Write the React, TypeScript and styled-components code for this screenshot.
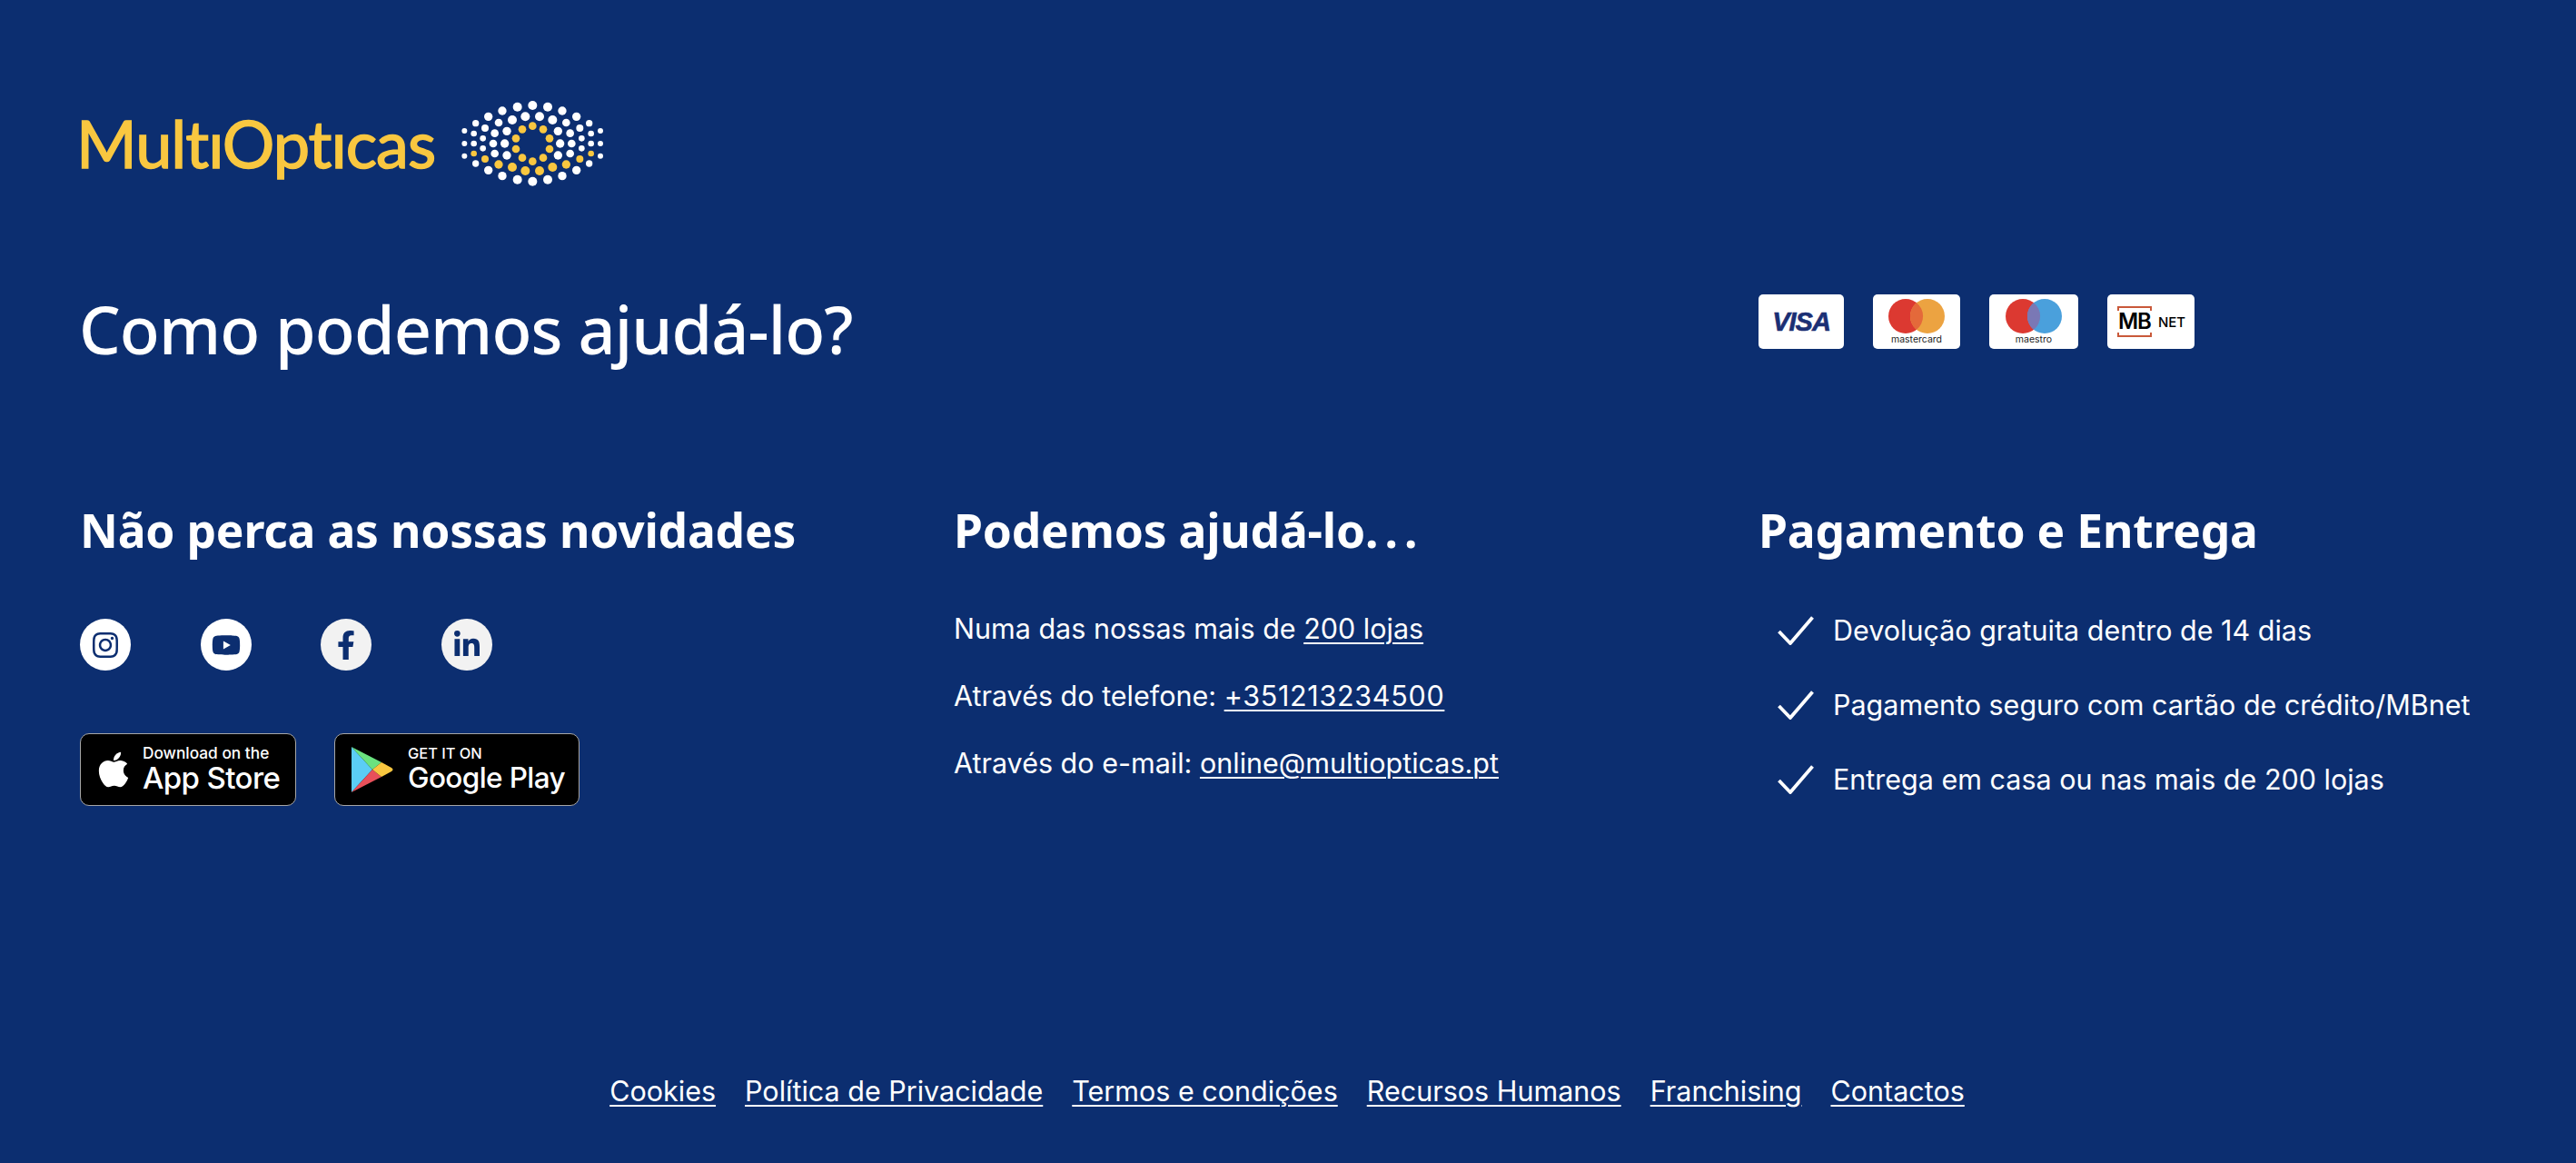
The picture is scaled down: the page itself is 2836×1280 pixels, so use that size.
import { createGlobalStyle } from 'styled-components';
import styled from 'styled-components';
import { FaApple, FaFacebookF, FaInstagram, FaLinkedinIn, FaYoutube } from 'react-icons/fa';

const HEADING_FONT = `"Noto Sans", "Open Sans", sans-serif`;
const BODY_FONT = `Inter, "Liberation Sans", sans-serif`;
const YELLOW = '#f9c740';

// [x, y, r, yellow] measured on a 540x330 canvas
const DOTS: [number, number, number, number][] = [
	[64, 132, 9, 0], [101, 107, 11, 0], [143, 85, 14, 0], [189, 66, 14, 0], [239, 53, 15, 0], [289, 48, 15, 0],
	[339, 53, 15, 0], [387, 66, 14, 0], [434, 85, 14, 0], [476, 107, 11, 0], [513, 132, 9, 0],
	[95, 141, 10, 0], [132, 123, 12, 0], [177, 105, 13, 0], [222, 96, 15, 0], [265, 85, 15, 0],
	[312, 85, 15, 0], [355, 96, 15, 0], [400, 105, 13, 0], [445, 123, 12, 0], [482, 141, 10, 0],
	[125, 157, 10, 0], [164, 140, 13, 0], [204, 133, 14, 0], [255, 127, 13, 1], [289, 116, 13, 1],
	[324, 127, 13, 1], [373, 133, 14, 0], [413, 140, 13, 0], [451, 157, 10, 0],
	[64, 174, 9, 0], [95, 174, 10, 0], [159, 174, 13, 0], [197, 174, 14, 0], [380, 174, 14, 0],
	[418, 174, 13, 0], [482, 174, 10, 0], [513, 174, 9, 0],
	[234, 157, 13, 1], [345, 157, 13, 1], [234, 192, 13, 1], [345, 192, 13, 1],
	[125, 190, 10, 0], [164, 207, 13, 0], [204, 213, 14, 0], [373, 213, 14, 0], [413, 207, 13, 0], [451, 190, 10, 0],
	[64, 215, 9, 0], [95, 207, 10, 1], [132, 225, 12, 1], [177, 243, 14, 1], [222, 252, 15, 1], [265, 264, 15, 1],
	[312, 264, 15, 1], [355, 252, 15, 1], [400, 243, 14, 1], [445, 225, 12, 1], [482, 207, 10, 1], [513, 215, 9, 0],
	[255, 221, 13, 1], [289, 233, 13, 1], [324, 221, 13, 1],
	[101, 240, 11, 0], [143, 262, 14, 0], [189, 281, 14, 0], [239, 293, 15, 0], [289, 299, 15, 0],
	[339, 293, 15, 0], [387, 281, 14, 0], [434, 262, 14, 0], [476, 240, 11, 0],
];

const GlobalStyle = createGlobalStyle`
	html, body {
		margin: 0;
		padding: 0;
		background: #0c2e70;
	}
	a {
		color: #fff;
		text-decoration: underline;
		text-underline-offset: 4px;
		text-decoration-thickness: 2px;
	}
`;

const Page = styled.footer`
	box-sizing: border-box;
	width: 2836px;
	height: 1280px;
	background: #0c2e70;
	color: #fff;
	padding: 100px 0 0 88px;
	font-family: ${BODY_FONT};
	overflow: hidden;
`;

const LogoRow = styled.div`
	display: flex;
	align-items: center;
	gap: 11px;
	height: 110px;
	margin-left: -4px;
`;

const LogoText = styled.span`
	font-family: Lato, sans-serif;
	font-size: 72px;
	font-weight: 400;
	line-height: 84px;
	padding-top: 3px;
	color: ${YELLOW};
	letter-spacing: -1px;
	-webkit-text-stroke: 1.5px ${YELLOW};
`;

const Grid = styled.div`
	display: grid;
	grid-template-columns: 962px 886px 1fr;
	padding-top: 114px;
`;

const BigTitle = styled.h1`
	grid-column: 1 / 3;
	margin: -2px 0 0 -1px;
	height: 82px;
	font-family: ${HEADING_FONT};
	font-size: 72px;
	font-weight: 500;
	line-height: 80px;
	letter-spacing: -0.9px;
`;

const Cards = styled.div`
	display: flex;
	gap: 32px;
`;

const Card = styled.div<{ $w: number }>`
	width: ${(p) => p.$w}px;
	height: 60px;
	background: #fff;
	border-radius: 5px;
	display: flex;
	flex-direction: column;
	align-items: center;
	justify-content: center;
	color: #222;
`;

const VisaMark = styled.span`
	font-family: "Liberation Sans", sans-serif;
	font-size: 29px;
	font-weight: 700;
	font-style: italic;
	letter-spacing: -1px;
	color: #1b2f74;
	-webkit-text-stroke: 0.6px #1b2f74;
`;

const CardCaption = styled.span`
	font-family: Inter, sans-serif;
	font-size: 10.5px;
	line-height: 11px;
	margin-top: 1px;
`;

const MbWrap = styled.div`
	display: flex;
	align-items: center;
	gap: 6px;
`;

const MbMark = styled.span`
	position: relative;
	font-family: Inter, sans-serif;
	font-size: 24px;
	font-weight: 600;
	letter-spacing: -1px;
	color: #000;
	padding: 0 2px;
	line-height: 36px;

	&::before,
	&::after {
		content: '';
		position: absolute;
		left: 1px;
		right: 1px;
		height: 3px;
		border: 2px solid #c9593a;
	}
	&::before {
		top: 1px;
		border-bottom: 0;
	}
	&::after {
		bottom: 1px;
		border-top: 0;
	}
`;

const MbNet = styled.span`
	font-family: Inter, sans-serif;
	font-size: 15px;
	font-weight: 500;
	color: #000;
`;

const Column = styled.section`
	padding-top: 137px;
`;

const ColumnTitle = styled.h2`
	margin: 0;
	height: 84px;
	font-family: ${HEADING_FONT};
	font-size: 51.5px;
	font-weight: 700;
	line-height: 84px;
	letter-spacing: -0.2px;
`;

const Ellipsis = styled.span`
	letter-spacing: 7px;
`;

const Socials = styled.div`
	display: flex;
	gap: 76.5px;
	margin-top: 56px;
`;

const Social = styled.a<{ $bg: string }>`
	width: 56px;
	height: 57px;
	border-radius: 50%;
	background: ${(p) => p.$bg};
	color: #0c2e70;
	display: flex;
	align-items: center;
	justify-content: center;
	font-size: 32px;
`;

const Badges = styled.div`
	display: flex;
	gap: 42px;
	margin-top: 69px;
`;

const Badge = styled.div<{ $w: number; $pad: number; $gap: number }>`
	box-sizing: border-box;
	width: ${(p) => p.$w}px;
	height: 80px;
	background: #000;
	border: 1.5px solid #a6a6a6;
	border-radius: 10px;
	display: flex;
	align-items: center;
	gap: ${(p) => p.$gap}px;
	padding-left: ${(p) => p.$pad}px;
	color: #fff;
`;

const BadgeText = styled.div`
	display: flex;
	flex-direction: column;
	white-space: nowrap;
`;

const BadgeSmall = styled.span<{ $size: number }>`
	font-size: ${(p) => p.$size}px;
	line-height: 18px;
	font-weight: 500;
`;

const BadgeBig = styled.span<{ $size: number }>`
	font-size: ${(p) => p.$size}px;
	line-height: 36px;
	font-weight: 500;
	letter-spacing: -0.6px;
`;

const LinkList = styled.div`
	display: flex;
	flex-direction: column;
	gap: 38px;
	margin-top: 49px;
`;

const Line = styled.p`
	margin: 0;
	font-size: 30.5px;
	line-height: 36px;
`;

const Phone = styled.a`
	letter-spacing: 0.7px;
`;

const Checks = styled.ul`
	list-style: none;
	margin: 51px 0 0;
	padding: 0 0 0 21px;
	display: flex;
	flex-direction: column;
	gap: 46px;
`;

const Check = styled.li`
	display: flex;
	align-items: center;
	gap: 21px;
	font-size: 30.5px;
	line-height: 36px;
	white-space: nowrap;
`;

const BottomLinks = styled.nav`
	display: flex;
	justify-content: center;
	gap: 32px;
	margin: 296px 0 0 -90px;
	font-size: 30.5px;
	line-height: 36px;
`;

const Logo = () => (
	<LogoRow>
		<LogoText>MultıOptıcas</LogoText>
		<svg width="180" height="110" viewBox="0 0 540 330">
			{DOTS.map(([x, y, r, yellow]) => (
				<circle key={`${x}-${y}`} cx={x} cy={y} r={r} fill={yellow ? YELLOW : '#fff'} />
			))}
		</svg>
	</LogoRow>
);

const Circles = ({ right }: { right: string }) => (
	<svg width="62" height="38" viewBox="0 0 62 38">
		<circle cx="19" cy="19" r="19" fill="#dc3931" />
		<circle cx="43" cy="19" r="19" fill={right} />
		<path d="M31 4.2a19 19 0 0 1 0 29.6a19 19 0 0 1 0-29.6z" fill={right === '#eca341' ? '#e4693a' : '#7a78b5'} />
	</svg>
);

const PlayIcon = () => (
	<svg width="46" height="52" viewBox="0 0 46 52">
		<path d="M0 1v50l23-25z" fill="#5bcdf5" />
		<path d="M0 1l33 17-10 8z" fill="#6ae27f" />
		<path d="M0 51l33-17-10-8z" fill="#e8505a" />
		<path d="M33 18l11 6q3 2 0 4l-11 6-10-8z" fill="#f9c740" />
	</svg>
);

const CheckIcon = () => (
	<svg width="40" height="32" viewBox="0 0 40 32">
		<path d="M1.5 17L14 30L38.5 1.5" fill="none" stroke="#fff" strokeWidth="3.8" />
	</svg>
);

export default function App() {
	return (
		<Page>
			<GlobalStyle />
			<Logo />
			<Grid>
				<BigTitle>Como podemos ajudá-lo?</BigTitle>
				<Cards>
					<Card $w={94}>
						<VisaMark>VISA</VisaMark>
					</Card>
					<Card $w={96}>
						<Circles right="#eca341" />
						<CardCaption>mastercard</CardCaption>
					</Card>
					<Card $w={98}>
						<Circles right="#4aa0dc" />
						<CardCaption>maestro</CardCaption>
					</Card>
					<Card $w={96}>
						<MbWrap>
							<MbMark>MB</MbMark>
							<MbNet>NET</MbNet>
						</MbWrap>
					</Card>
				</Cards>

				<Column>
					<ColumnTitle>Não perca as nossas novidades</ColumnTitle>
					<Socials>
						<Social $bg="#fff"><FaInstagram /></Social>
						<Social $bg="#fff"><FaYoutube /></Social>
						<Social $bg="#f2f2f2"><FaFacebookF /></Social>
						<Social $bg="#f2f2f2"><FaLinkedinIn /></Social>
					</Socials>
					<Badges>
						<Badge $w={238} $pad={14} $gap={10}>
							<FaApple size={44} />
							<BadgeText>
								<BadgeSmall $size={17.3}>Download on the</BadgeSmall>
								<BadgeBig $size={33}>App Store</BadgeBig>
							</BadgeText>
						</Badge>
						<Badge $w={270} $pad={18} $gap={16}>
							<PlayIcon />
							<BadgeText>
								<BadgeSmall $size={16.4}>GET IT ON</BadgeSmall>
								<BadgeBig $size={31.5}>Google Play</BadgeBig>
							</BadgeText>
						</Badge>
					</Badges>
				</Column>

				<Column>
					<ColumnTitle>Podemos ajudá-lo<Ellipsis>...</Ellipsis></ColumnTitle>
					<LinkList>
						<Line>Numa das nossas mais de <a href="#">200 lojas</a></Line>
						<Line>Através do telefone: <Phone href="#">+351213234500</Phone></Line>
						<Line>Através do e-mail: <a href="#">online@multiopticas.pt</a></Line>
					</LinkList>
				</Column>

				<Column>
					<ColumnTitle>Pagamento e Entrega</ColumnTitle>
					<Checks>
						<Check><CheckIcon />Devolução gratuita dentro de 14 dias</Check>
						<Check><CheckIcon />Pagamento seguro com cartão de crédito/MBnet</Check>
						<Check><CheckIcon />Entrega em casa ou nas mais de 200 lojas</Check>
					</Checks>
				</Column>
			</Grid>
			<BottomLinks>
				<a href="#">Cookies</a>
				<a href="#">Política de Privacidade</a>
				<a href="#">Termos e condições</a>
				<a href="#">Recursos Humanos</a>
				<a href="#">Franchising</a>
				<a href="#">Contactos</a>
			</BottomLinks>
		</Page>
	);
}
